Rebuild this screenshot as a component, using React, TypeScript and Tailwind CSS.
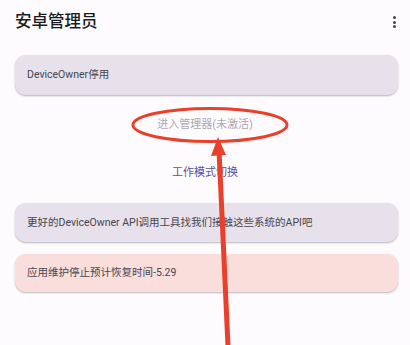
import React from 'react';

const font = { fontFamily: 'Roboto, "Noto Sans CJK SC", sans-serif' };

const Card: React.FC<{ tone?: 'plain' | 'error'; children: React.ReactNode; className?: string }> = ({ tone = 'plain', children, className = '' }) => (
    <div
        className={`mx-[12px] ml-[15px] flex items-center rounded-[11px] px-[12px] shadow-[0_1px_2px_rgba(0,0,0,0.28)] ${
            tone === 'error' ? 'bg-[#f9dedc]' : 'bg-[#e6e1ea]'
        } ${className}`}
    >
        {children}
    </div>
);

const Annotation: React.FC = () => (
    <svg className="pointer-events-none absolute inset-0" width="410" height="345" viewBox="0 0 410 345">
        <ellipse cx="210" cy="125" rx="77" ry="16.5" fill="none" stroke="#e8402a" strokeWidth="3" />
        <line x1="228" y1="346" x2="219" y2="150" stroke="#e8402a" strokeWidth="5" />
        <polygon points="218,137 211,156 226,155" fill="#e8402a" />
    </svg>
);

export default function App() {
    return (
        <div className="relative h-[345px] w-[410px] overflow-hidden bg-[#fdfbfe]" style={font}>
            <div className="flex h-[44px] items-center justify-between pl-[15px] pr-[14px]">
                <h1 className="text-[16.5px] font-medium text-[#1c1b1f]">安卓管理员</h1>
                <div className="flex flex-col gap-[1.5px]">
                    <span className="h-[3px] w-[3px] rounded-full bg-[#49454f]" />
                    <span className="h-[3px] w-[3px] rounded-full bg-[#49454f]" />
                    <span className="h-[3px] w-[3px] rounded-full bg-[#49454f]" />
                </div>
            </div>

            <Card className="mt-[11px] h-[40px]">
                <span className="text-[10.5px] text-[#49454f]">DeviceOwner停用</span>
            </Card>

            <div className="mt-[10px] flex h-[40px] items-center justify-center">
                <span className="text-[11px] text-[#aba8b0]">进入管理器(未激活)</span>
            </div>

            <div className="mt-[8px] flex h-[40px] items-center justify-center">
                <span className="text-[11px] text-[#5b51a3]">工作模式切换</span>
            </div>

            <Card className="mt-[10px] h-[39px]">
                <span className="text-[10.5px] text-[#49454f]">更好的DeviceOwner API调用工具找我们接触这些系统的API吧</span>
            </Card>

            <Card tone="error" className="mt-[12px] h-[38px]">
                <span className="text-[10.5px] text-[#49454f]">应用维护停止预计恢复时间-5.29</span>
            </Card>

            <Annotation />
        </div>
    );
}
